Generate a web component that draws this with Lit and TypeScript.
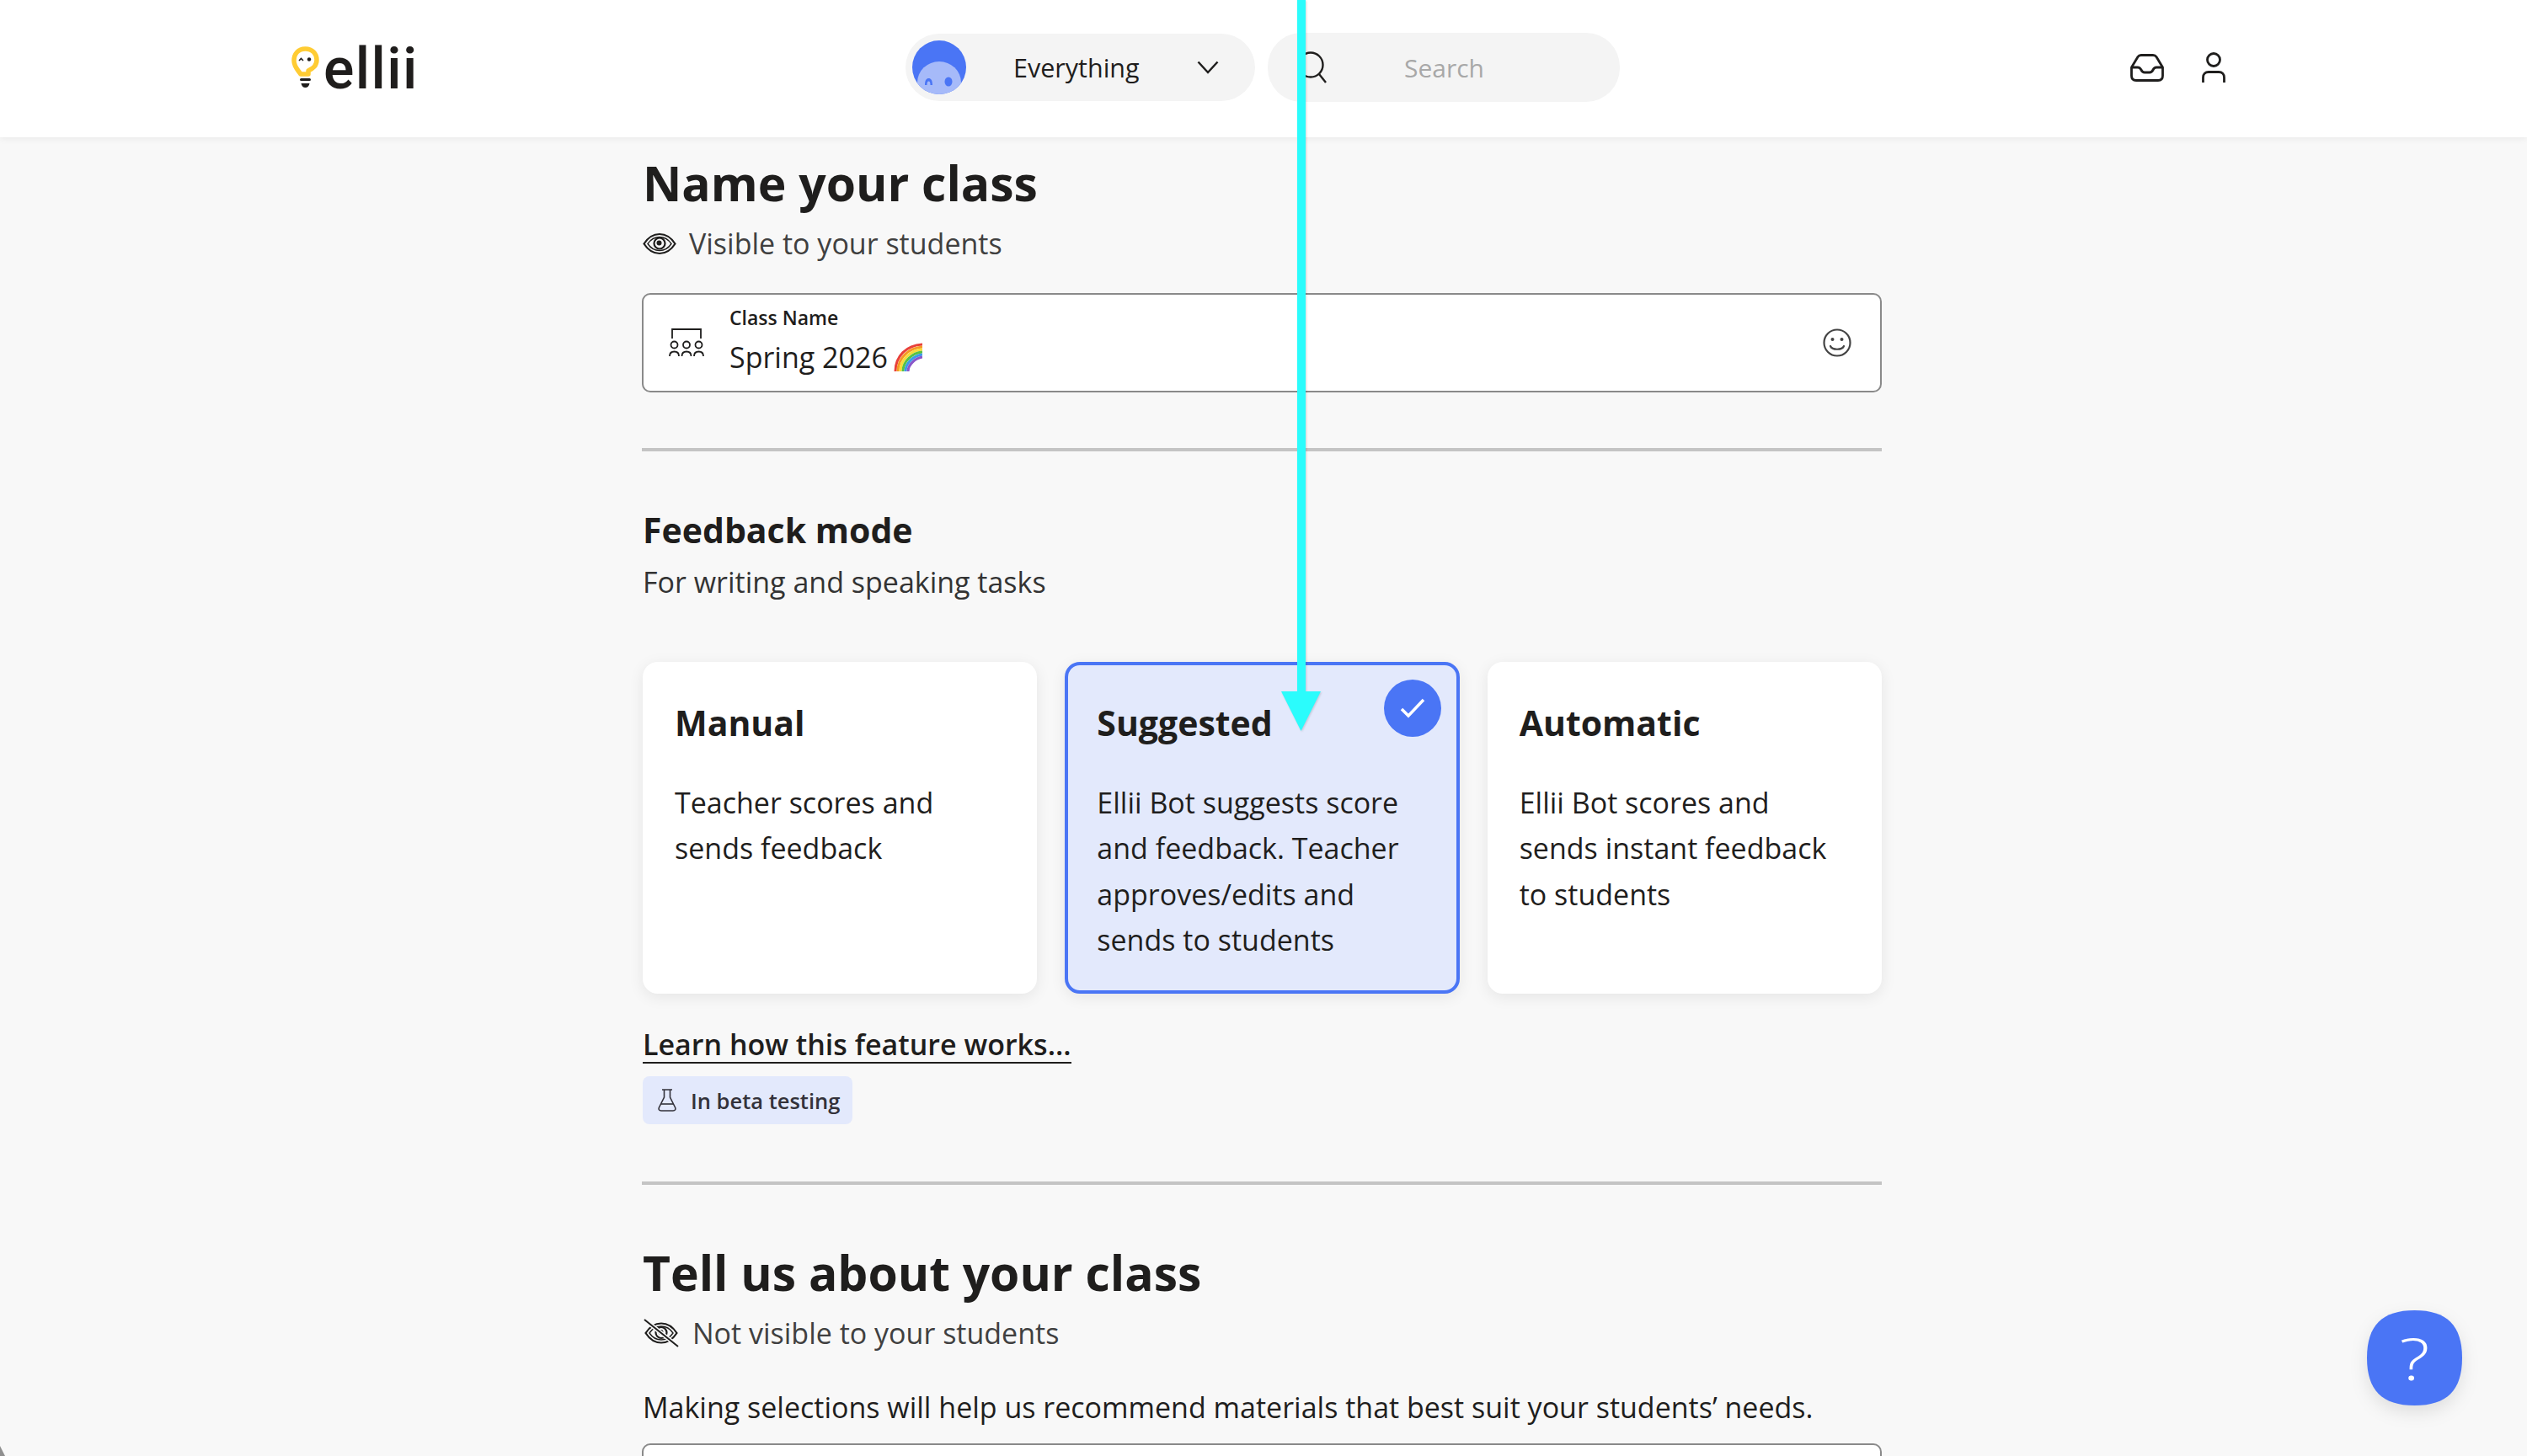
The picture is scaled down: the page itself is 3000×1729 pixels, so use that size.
import { LitElement, html, css, svg } from 'lit';
import { customElement } from 'lit/decorators.js';

const cards = [
  { title: 'Manual', body: ['Teacher scores and', 'sends feedback'], selected: false },
  { title: 'Suggested', body: ['Ellii Bot suggests score', 'and feedback. Teacher', 'approves/edits and', 'sends to students'], selected: true },
  { title: 'Automatic', body: ['Ellii Bot scores and', 'sends instant feedback', 'to students'], selected: false },
];

const eye = svg`<path d="M1.500 13C7 4.500 13 1.500 20 1.500S33 4.500 38.500 13C33 21.500 27 24.500 20 24.500S7 21.500 1.500 13Z" fill="none" stroke="#1f1e1d" stroke-width="2.200"/>
  <path d="M6 13C10 7 14 5 20 5S30 7 34 13C30 19 26 21 20 21S10 19 6 13Z" fill="none" stroke="#1f1e1d" stroke-width="1.400"/>
  <circle cx="20" cy="12.500" r="6.500" fill="none" stroke="#1f1e1d" stroke-width="2.200"/>
  <circle cx="19.500" cy="12" r="3" fill="#1f1e1d"/>`;

@customElement('app-root')
export class AppRoot extends LitElement {
  static styles = css`
    :host {
      display: block;
      position: relative;
      height: 1729px;
      overflow: hidden;
      background: #f8f8f8;
      color: #1f1e1d;
      font-family: 'Open Sans', 'Noto Sans', sans-serif;
    }
    svg { display: block; }
    header {
      display: flex;
      align-items: center;
      position: relative;
      z-index: 1;
      height: 163px;
      padding: 0 0 3px 346px;
      box-sizing: border-box;
      background: #fff;
      box-shadow: 0 2px 8px rgba(0, 0, 0, 0.06);
    }
    .logo { display: flex; align-items: center; gap: 5px; width: 729px; }
    .logo span {
      font-family: Roboto, sans-serif;
      font-size: 68px;
      font-weight: 500;
      line-height: 50px;
      letter-spacing: 1.4px;
      color: #1f1d1c;
      padding-top: 3px;
    }
    .pill {
      display: flex;
      align-items: center;
      box-sizing: border-box;
      background: #f4f4f4;
      border-radius: 40px;
      font-size: 30px;
    }
    .select { width: 415px; height: 80px; padding-left: 8px; margin-right: 15px; font-size: 30.500px; font-weight: 500; }
    .select .label { margin-left: 56px; width: 218px; }
    .search { width: 418px; height: 82px; padding-left: 35px; color: #a8a8a8; }
    .search .label { margin-left: 91px; }
    .actions { display: flex; align-items: center; gap: 45px; margin-left: 606px; }
    main { width: 1471px; margin-left: 763px; }
    h1 { margin: 13px 0 0; font-size: 57px; line-height: 82px; font-weight: 700; }
    h1.second { margin-top: 63px; }
    h2 { margin: 63px 0 0; font-size: 41px; line-height: 60px; font-weight: 700; }
    .visibility {
      display: flex;
      align-items: center;
      gap: 16px;
      margin-top: 6px;
      font-size: 34px;
      line-height: 50px;
      color: #404040;
    }
    .visibility span { margin-left: -1px; }
    .visibility svg { margin-left: 0; }
    .field {
      display: flex;
      align-items: center;
      box-sizing: border-box;
      height: 118px;
      margin: 34px 0 0 -1px;
      padding: 0 34px 0 30px;
      background: #fff;
      border: 2px solid #8a8a8a;
      border-radius: 10px;
    }
    .field .text { flex: 1; margin-left: 30px; margin-top: -4px; }
    .field .caption { font-size: 23px; font-weight: 600; line-height: 32px; }
    .field .value { display: flex; align-items: center; gap: 7px; font-size: 34px; line-height: 50px; margin-top: 6px; }
    hr { height: 4px; margin: 66px 0 0 -1px; border: 0; background: #c4c4c4; }
    hr.lower { margin-top: 68px; }
    .hint { margin: 7px 0 0; font-size: 34px; line-height: 50px; color: #333; }
    .cards { display: grid; grid-template-columns: repeat(3, 1fr); gap: 33px; margin-top: 70px; }
    .card {
      position: relative;
      box-sizing: border-box;
      height: 394px;
      padding: 38px 34px 34px;
      background: #fff;
      border: 4px solid transparent;
      border-radius: 18px;
      box-shadow: 0 4px 18px rgba(0, 0, 0, 0.08);
    }
    .card.selected { background: #e3e9fc; border-color: #4a75f5; }
    .card h3 { margin: 0 0 38px; font-size: 41px; line-height: 60px; font-weight: 700; }
    .card p { margin: 0; font-size: 34px; line-height: 54.400px; }
    .check {
      position: absolute;
      top: 17px;
      right: 18px;
      display: flex;
      align-items: center;
      justify-content: center;
      width: 68px;
      height: 68px;
      border-radius: 50%;
      background: #4a75f5;
    }
    .learn {
      display: block;
      width: fit-content;
      margin-top: 40px;
      font-size: 34px;
      font-weight: 600;
      line-height: 41px;
      border-bottom: 2px solid #1f1e1d;
    }
    .chip {
      display: flex;
      align-items: center;
      gap: 17px;
      width: 249px;
      box-sizing: border-box;
      height: 57px;
      margin-top: 15px;
      padding-left: 18px;
      background: #e3e9fc;
      border-radius: 8px;
      font-size: 25.500px;
      font-weight: 600;
      color: #33323a;
      white-space: nowrap;
    }
    .making { margin: 38px 0 0; font-size: 34px; line-height: 50px; }
    .field.cut { margin-top: 18px; }
    .arrow {
      position: absolute;
      z-index: 2;
      left: 1521px;
      top: 0;
      filter: drop-shadow(1px 1px 1px rgba(0, 0, 0, 0.15));
    }
    .help { position: absolute; left: 2810px; top: 1556px; width: 113px; height: 113px; }
    .help svg { position: absolute; inset: 0; overflow: visible; filter: drop-shadow(0 8px 10px rgba(0, 0, 0, 0.1)); }
    .help span {
      position: absolute;
      inset: 0;
      display: flex;
      align-items: center;
      justify-content: center;
      font-size: 68px;
      font-weight: 300;
      color: #fff;
      transform: scaleX(1.25);
    }
    .corner {
      position: absolute;
      left: 0;
      bottom: 0;
      width: 6px;
      height: 12px;
      background: #8f8f8f;
      clip-path: polygon(0 0, 100% 100%, 0 100%);
    }
  `;

  renderHeader() {
    return html`<header>
      <div class="logo">
        <svg width="33" height="50" viewBox="0 0 33 50">
          <path d="M16.500 3C8 3 3 9 3 17C3 22 5 25 8 29L11 33H20V29C26 26 30 23 30 16C30 9 25 3 16.500 3Z" fill="none" stroke="#ffcc33" stroke-width="5.500" stroke-linejoin="round"/>
          <path d="M9 17L11.500 14.500L14 17" fill="none" stroke="#1f1d1c" stroke-width="1.600"/>
          <circle cx="21" cy="15.500" r="2.200" fill="#1f1d1c"/>
          <rect x="10" y="38" width="13" height="3" rx="1.500" fill="#1f1d1c"/>
          <path d="M11.500 44H21.500C21 47 19 49 16.500 49S12 47 11.500 44Z" fill="#1f1d1c"/>
        </svg>
        <span>ellii</span>
      </div>
      <div class="pill select">
        <svg width="64" height="64" viewBox="0 0 64 64">
          <defs><clipPath id="av"><circle cx="32" cy="32" r="32"/></clipPath></defs>
          <circle cx="32" cy="32" r="32" fill="#4a75f5"/>
          <g clip-path="url(#av)">
            <ellipse cx="32" cy="50" rx="26" ry="25" fill="#a6baf9"/>
            <path d="M15 53C15 47 17 45 19.500 45S24 47 24 53L21.500 53C21.500 50 21 48.500 19.500 48.500S17.500 50 17.500 53Z" fill="#4a75f5"/>
            <ellipse cx="43" cy="49" rx="4.500" ry="5.500" fill="#4a75f5"/>
          </g>
        </svg>
        <span class="label">Everything</span>
        <svg width="26" height="16" viewBox="0 0 26 16"><path d="M1.500 1.500L13 14L24.500 1.500" fill="none" stroke="#1f1e1d" stroke-width="2.500"/></svg>
      </div>
      <div class="pill search">
        <svg width="36" height="38" viewBox="0 0 36 38"><circle cx="16" cy="16" r="14.500" fill="none" stroke="#1f1e1d" stroke-width="2.400"/><path d="M26 27L34 37" fill="none" stroke="#1f1e1d" stroke-width="2.400"/></svg>
        <span class="label">Search</span>
      </div>
      <div class="actions">
        <svg width="40" height="33" viewBox="0 0 40 33" fill="none" stroke="#1f1e1d" stroke-width="2.800" stroke-linejoin="round">
          <path d="M1.500 16V26C1.500 29.500 3.500 31.500 7 31.500H33C36.500 31.500 38.500 29.500 38.500 26V16L31 3.500C30 2 29 1.500 27 1.500H13C11 1.500 10 2 9 3.500Z"/>
          <path d="M1.500 16H9C11 16 12 17 13 19C14 21 15 22 17 22H23C25 22 26 21 27 19C28 17 29 16 31 16H38.500"/>
        </svg>
        <svg width="28" height="36" viewBox="0 0 28 36" fill="none" stroke="#1f1e1d" stroke-width="2.800">
          <circle cx="14" cy="9" r="7.500"/>
          <path d="M1.500 36V30C1.500 26 4 23.500 8 23.500H20C24 23.500 26.500 26 26.500 30V36"/>
        </svg>
      </div>
    </header>`;
  }

  renderCard(card: (typeof cards)[number]) {
    return html`<div class="card ${card.selected ? 'selected' : ''}">
      <h3>${card.title}</h3>
      <p>${card.body.map((line) => html`${line}<br />`)}</p>
      ${card.selected
        ? html`<div class="check">
            <svg width="30" height="24" viewBox="0 0 30 24"><path d="M2 13L10 21L28 2" fill="none" stroke="#fff" stroke-width="3.500"/></svg>
          </div>`
        : ''}
    </div>`;
  }

  render() {
    return html`
      ${this.renderHeader()}
      <main>
        <h1>Name your class</h1>
        <div class="visibility">
          <svg width="40" height="27" viewBox="0 0 40 26">${eye}</svg>
          <span>Visible to your students</span>
        </div>
        <div class="field">
          <svg width="42" height="34" viewBox="0 0 42 34" fill="none" stroke="#1f1e1d" stroke-width="1.800">
            <path d="M4 12V1H38V12"/>
            <circle cx="6.500" cy="19.500" r="4"/><circle cx="21" cy="19.500" r="4"/><circle cx="35.500" cy="19.500" r="4"/>
            <path d="M1 33C1 29.500 3 27.500 6.500 27.500S12 29.500 12 33"/>
            <path d="M15.500 33C15.500 29.500 17.500 27.500 21 27.500S26.500 29.500 26.500 33"/>
            <path d="M30 33C30 29.500 32 27.500 35.500 27.500S41 29.500 41 33"/>
          </svg>
          <div class="text">
            <div class="caption">Class Name</div>
            <div class="value">
              <span>Spring 2026</span>
              <svg width="34" height="34" viewBox="0 0 34 34" fill="none" stroke-width="3">
                <path d="M2 34C2 16 15 3 34 2" stroke="#e8413a"/>
                <path d="M5 34C5 18 18 6 34 5" stroke="#f59a23"/>
                <path d="M8 34C8 20 20 9 34 8" stroke="#f7dc3a"/>
                <path d="M11 34C11 22 22 12 34 11" stroke="#58c244"/>
                <path d="M14 34C14 24 24 15 34 14" stroke="#3a9be8"/>
                <path d="M17 34C17 26 26 18 34 17" stroke="#8a56c9"/>
              </svg>
            </div>
          </div>
          <svg width="34" height="34" viewBox="0 0 34 34" fill="none" stroke="#444" stroke-width="2.200">
            <circle cx="17" cy="17" r="15.500"/>
            <path d="M9 21C11 26 23 26 25 21" stroke-linecap="round"/>
            <circle cx="11.500" cy="13" r="2" fill="#444" stroke="none"/>
            <circle cx="22.500" cy="13" r="2" fill="#444" stroke="none"/>
          </svg>
        </div>
        <hr />
        <h2>Feedback mode</h2>
        <p class="hint">For writing and speaking tasks</p>
        <div class="cards">${cards.map((c) => this.renderCard(c))}</div>
        <a class="learn">Learn how this feature works...</a>
        <div class="chip">
          <svg width="22" height="27" viewBox="0 0 22 27" fill="none" stroke="#33323a" stroke-width="1.600">
            <path d="M5 1H17M7.500 1V10L1.500 22C0.500 24.500 1.500 26 4 26H18C20.500 26 21.500 24.500 20.500 22L14.500 10V1"/>
            <path d="M3.500 18H18.500"/>
          </svg>
          <span>In beta testing</span>
        </div>
        <hr class="lower" />
        <h1 class="second">Tell us about your class</h1>
        <div class="visibility">
          <svg width="44" height="34" viewBox="0 0 44 34">
            <g transform="translate(2 4)">${eye}</g>
            <path d="M2 1L42 33" stroke="#f8f8f8" stroke-width="5"/>
            <path d="M2 1L42 33" stroke="#1f1e1d" stroke-width="2"/>
          </svg>
          <span>Not visible to your students</span>
        </div>
        <p class="making">Making selections will help us recommend materials that best suit your students’ needs.</p>
        <div class="field cut"></div>
      </main>
      <svg class="arrow" width="48" height="870" viewBox="0 0 48 870">
        <rect x="19" y="0" width="10" height="825" fill="#2bfcfc"/>
        <path d="M0 821H47L23.500 868Z" fill="#2bfcfc"/>
      </svg>
      <div class="help">
        <svg width="113" height="113" viewBox="0 0 113 113">
          <path d="M56.500 0C95 0 113 18 113 56.500S95 113 56.500 113S0 95 0 56.500S18 0 56.500 0Z" fill="#4a75f5"/>
        </svg>
        <span>?</span>
      </div>
      <div class="corner"></div>
    `;
  }
}
